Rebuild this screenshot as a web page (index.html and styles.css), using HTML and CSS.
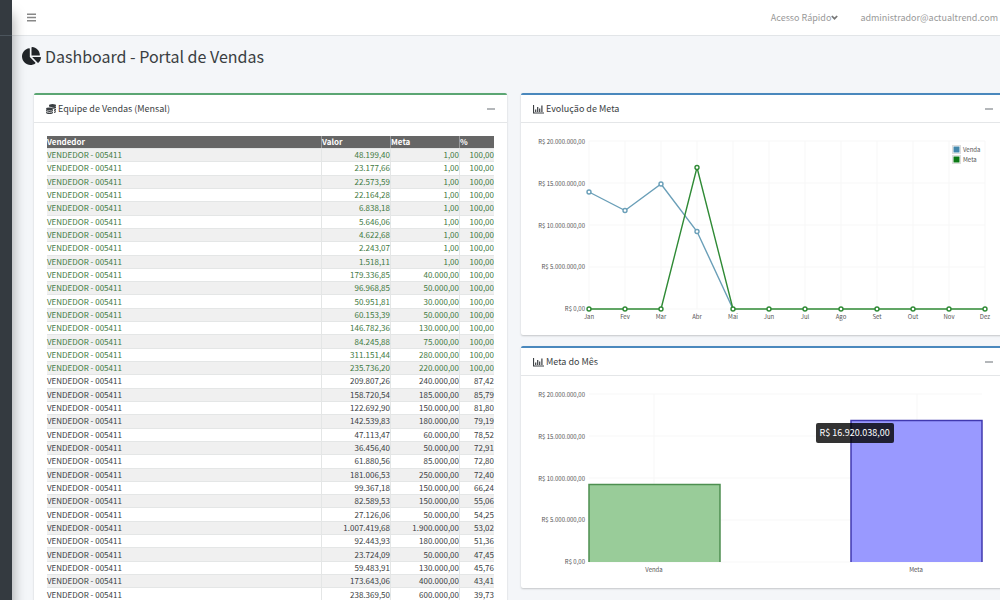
FILE: index.html
```html
<!DOCTYPE html>
<html lang="pt-BR">
<head>
    <meta charset="UTF-8">
    <meta name="viewport" content="width=device-width, initial-scale=1.0">
    <title>Dashboard - Portal de Vendas</title>
    <link rel="stylesheet" href="styles.css">
</head>
<body>
    <div class="wrapper">
        <aside class="sidebar">
            <div class="sidebar-brand"></div>
        </aside>
        <div class="page">
            <header class="navbar">
                <button class="menu-btn" type="button" aria-label="Menu">
                    <svg viewBox="0 0 9 9" width="9" height="9"><path d="M0 1.2h9M0 4.5h9M0 7.8h9" stroke="currentColor" stroke-width="1.4"/></svg>
                </button>
                <nav class="nav-right">
                    <a href="#">Acesso Rápido<svg class="chevron" viewBox="0 0 7 5" width="7" height="5"><path d="M.8 1l2.7 2.7L6.2 1" fill="none" stroke="currentColor" stroke-width="1.7"/></svg></a>
                    <a href="#">administrador@actualtrend.com</a>
                </nav>
            </header>

            <main>
                <h1>
                    <svg viewBox="0 0 544 512" width="19" height="18" fill="currentColor"><path d="M527.790 288H290.500l158.030 158.030c6.040 6.040 15.980 6.530 22.190.68 38.700-36.460 65.320-85.560 73.130-140.860 1.340-9.460-6.510-17.850-16.060-17.850zm-15.830-64.800C503.720 103.740 408.260 8.280 288.800.040 279.680-.590 272 7.100 272 16.240V240h223.770c9.140 0 16.820-7.680 16.190-16.800zM224 288V50.710c0-9.550-8.390-17.400-17.840-16.060C86.990 51.490-4.100 155.600.140 280.370 4.500 408.510 114.830 513.590 243.030 511.980c50.400-.630 96.970-16.870 135.260-44.030 7.900-5.600 8.420-17.230 1.570-24.080L224 288z"/></svg>
                    Dashboard - Portal de Vendas
                </h1>

                <div class="grid">
                    <section class="card card-green">
                        <div class="card-header">
                            <h2>
                                <svg viewBox="0 0 10 10" width="10" height="10" fill="currentColor"><ellipse cx="6.500" cy="1.500" rx="3.500" ry="1.500"/><path d="M3 2.200c1.500 1.300 5.500 1.300 7 0v1.500c-.6.700-1.600 1-2.700 1.100C6.800 3.600 5 3 3 3.100zM8 5.500c.8-.1 1.500-.4 2-.8v1.500c-.5.500-1.200.8-2 .9zM8 7.700c.8-.1 1.500-.4 2-.8v.9c0 .6-.9 1-2 1.200z"/><ellipse cx="3.500" cy="4.900" rx="3.500" ry="1.300"/><path d="M0 5.800c1.500 1.200 5.500 1.200 7 0v1.300c-1.500 1.200-5.500 1.200-7 0zM0 7.800c1.500 1.200 5.500 1.200 7 0v.9c0 1.700-7 1.700-7 0z"/></svg>
                                Equipe de Vendas (Mensal)
                            </h2>
                            <button class="collapse-btn" type="button" aria-label="Minimizar"></button>
                        </div>
                        <div class="card-body">
                            <table class="sales">
                                <thead>
                                    <tr><th>Vendedor</th><th class="col-value">Valor</th><th class="col-value">Meta</th><th class="col-percent">%</th></tr>
                                </thead>
                                <tbody>
                                    <tr class="ok"><td>VENDEDOR - 005411</td><td>48.199,40</td><td>1,00</td><td>100,00</td></tr>
                                    <tr class="ok"><td>VENDEDOR - 005411</td><td>23.177,66</td><td>1,00</td><td>100,00</td></tr>
                                    <tr class="ok"><td>VENDEDOR - 005411</td><td>22.573,59</td><td>1,00</td><td>100,00</td></tr>
                                    <tr class="ok"><td>VENDEDOR - 005411</td><td>22.164,28</td><td>1,00</td><td>100,00</td></tr>
                                    <tr class="ok"><td>VENDEDOR - 005411</td><td>6.838,18</td><td>1,00</td><td>100,00</td></tr>
                                    <tr class="ok"><td>VENDEDOR - 005411</td><td>5.646,06</td><td>1,00</td><td>100,00</td></tr>
                                    <tr class="ok"><td>VENDEDOR - 005411</td><td>4.622,68</td><td>1,00</td><td>100,00</td></tr>
                                    <tr class="ok"><td>VENDEDOR - 005411</td><td>2.243,07</td><td>1,00</td><td>100,00</td></tr>
                                    <tr class="ok"><td>VENDEDOR - 005411</td><td>1.518,11</td><td>1,00</td><td>100,00</td></tr>
                                    <tr class="ok"><td>VENDEDOR - 005411</td><td>179.336,85</td><td>40.000,00</td><td>100,00</td></tr>
                                    <tr class="ok"><td>VENDEDOR - 005411</td><td>96.968,85</td><td>50.000,00</td><td>100,00</td></tr>
                                    <tr class="ok"><td>VENDEDOR - 005411</td><td>50.951,81</td><td>30.000,00</td><td>100,00</td></tr>
                                    <tr class="ok"><td>VENDEDOR - 005411</td><td>60.153,39</td><td>50.000,00</td><td>100,00</td></tr>
                                    <tr class="ok"><td>VENDEDOR - 005411</td><td>146.782,36</td><td>130.000,00</td><td>100,00</td></tr>
                                    <tr class="ok"><td>VENDEDOR - 005411</td><td>84.245,88</td><td>75.000,00</td><td>100,00</td></tr>
                                    <tr class="ok"><td>VENDEDOR - 005411</td><td>311.151,44</td><td>280.000,00</td><td>100,00</td></tr>
                                    <tr class="ok"><td>VENDEDOR - 005411</td><td>235.736,20</td><td>220.000,00</td><td>100,00</td></tr>
                                    <tr><td>VENDEDOR - 005411</td><td>209.807,26</td><td>240.000,00</td><td>87,42</td></tr>
                                    <tr><td>VENDEDOR - 005411</td><td>158.720,54</td><td>185.000,00</td><td>85,79</td></tr>
                                    <tr><td>VENDEDOR - 005411</td><td>122.692,90</td><td>150.000,00</td><td>81,80</td></tr>
                                    <tr><td>VENDEDOR - 005411</td><td>142.539,83</td><td>180.000,00</td><td>79,19</td></tr>
                                    <tr><td>VENDEDOR - 005411</td><td>47.113,47</td><td>60.000,00</td><td>78,52</td></tr>
                                    <tr><td>VENDEDOR - 005411</td><td>36.456,40</td><td>50.000,00</td><td>72,91</td></tr>
                                    <tr><td>VENDEDOR - 005411</td><td>61.880,56</td><td>85.000,00</td><td>72,80</td></tr>
                                    <tr><td>VENDEDOR - 005411</td><td>181.006,53</td><td>250.000,00</td><td>72,40</td></tr>
                                    <tr><td>VENDEDOR - 005411</td><td>99.367,18</td><td>150.000,00</td><td>66,24</td></tr>
                                    <tr><td>VENDEDOR - 005411</td><td>82.589,53</td><td>150.000,00</td><td>55,06</td></tr>
                                    <tr><td>VENDEDOR - 005411</td><td>27.126,06</td><td>50.000,00</td><td>54,25</td></tr>
                                    <tr><td>VENDEDOR - 005411</td><td>1.007.419,68</td><td>1.900.000,00</td><td>53,02</td></tr>
                                    <tr><td>VENDEDOR - 005411</td><td>92.443,93</td><td>180.000,00</td><td>51,36</td></tr>
                                    <tr><td>VENDEDOR - 005411</td><td>23.724,09</td><td>50.000,00</td><td>47,45</td></tr>
                                    <tr><td>VENDEDOR - 005411</td><td>59.483,91</td><td>130.000,00</td><td>45,76</td></tr>
                                    <tr><td>VENDEDOR - 005411</td><td>173.643,06</td><td>400.000,00</td><td>43,41</td></tr>
                                    <tr><td>VENDEDOR - 005411</td><td>238.369,50</td><td>600.000,00</td><td>39,73</td></tr>
                                </tbody>
                            </table>
                        </div>
                    </section>

                    <div class="column">
                        <section class="card card-blue">
                            <div class="card-header">
                                <h2>
                                    <svg viewBox="0 0 11 10" width="11" height="10"><path d="M.5 1v8H11M2.700 8V5.500M4.700 8V3M6.700 8V4.500M8.900 8V1.500" fill="none" stroke="currentColor" stroke-width="1.200"/></svg>
                                    Evolução de Meta
                                </h2>
                                <button class="collapse-btn" type="button" aria-label="Minimizar"></button>
                            </div>
                            <div class="card-body">
                                <svg class="chart" viewBox="0 0 458 186">
                                    <path class="gridline" d="M55 5H451M55 47H451M55 89H451M55 131H451M55 173H451M55 5V173M91 5V173M127 5V173M163 5V173M199 5V173M235 5V173M271 5V173M307 5V173M343 5V173M379 5V173M415 5V173M451 5V173"/>
                                    <g class="y-axis">
                                        <text x="51" y="8">R$ 20.000.000,00</text>
                                        <text x="51" y="50">R$ 15.000.000,00</text>
                                        <text x="51" y="92">R$ 10.000.000,00</text>
                                        <text x="51" y="133">R$ 5.000.000,00</text>
                                        <text x="51" y="175">R$ 0,00</text>
                                    </g>
                                    <g class="x-axis">
                                        <text x="55" y="183">Jan</text>
                                        <text x="91" y="183">Fev</text>
                                        <text x="127" y="183">Mar</text>
                                        <text x="163" y="183">Abr</text>
                                        <text x="199" y="183">Mai</text>
                                        <text x="235" y="183">Jun</text>
                                        <text x="271" y="183">Jul</text>
                                        <text x="307" y="183">Ago</text>
                                        <text x="343" y="183">Set</text>
                                        <text x="379" y="183">Out</text>
                                        <text x="415" y="183">Nov</text>
                                        <text x="451" y="183">Dez</text>
                                    </g>
                                    <g class="line-venda">
                                        <polyline points="55,56 91,74.500 127,48 163,95.500 199,173"/>
                                        <circle cx="55" cy="56" r="2"/>
                                        <circle cx="91" cy="74.500" r="2"/>
                                        <circle cx="127" cy="48" r="2"/>
                                        <circle cx="163" cy="95.500" r="2"/>
                                    </g>
                                    <g class="line-meta">
                                        <polyline points="55,173 127,173 163,31.500 199,173 451,173"/>
                                        <circle cx="55" cy="173" r="2"/>
                                        <circle cx="91" cy="173" r="2"/>
                                        <circle cx="127" cy="173" r="2"/>
                                        <circle cx="163" cy="31.500" r="2"/>
                                        <circle cx="199" cy="173" r="2"/>
                                        <circle cx="235" cy="173" r="2"/>
                                        <circle cx="271" cy="173" r="2"/>
                                        <circle cx="307" cy="173" r="2"/>
                                        <circle cx="343" cy="173" r="2"/>
                                        <circle cx="379" cy="173" r="2"/>
                                        <circle cx="415" cy="173" r="2"/>
                                        <circle cx="451" cy="173" r="2"/>
                                    </g>
                                    <g class="legend">
                                        <rect x="418.500" y="9.500" width="8" height="8" fill="#fff" stroke="#ddd"/>
                                        <rect x="420" y="11" width="5" height="5" fill="#4488ac" stroke="#4488ac"/>
                                        <text x="429" y="16">Venda</text>
                                        <rect x="418.500" y="19.500" width="8" height="8" fill="#fff" stroke="#ddd"/>
                                        <rect x="420" y="21" width="5" height="5" fill="#0d7a16" stroke="#0d7a16"/>
                                        <text x="429" y="26">Meta</text>
                                    </g>
                                </svg>
                            </div>
                        </section>

                        <section class="card card-blue">
                            <div class="card-header">
                                <h2>
                                    <svg viewBox="0 0 11 10" width="11" height="10"><path d="M.5 1v8H11M2.700 8V5.500M4.700 8V3M6.700 8V4.500M8.900 8V1.500" fill="none" stroke="currentColor" stroke-width="1.200"/></svg>
                                    Meta do Mês
                                </h2>
                                <button class="collapse-btn" type="button" aria-label="Minimizar"></button>
                            </div>
                            <div class="card-body">
                                <svg class="chart" viewBox="0 0 458 186">
                                    <path class="gridline" d="M55 5H448M55 47H448M55 89H448M55 131H448M55 173H448M120 5V173M383 5V173"/>
                                    <g class="y-axis">
                                        <text x="51" y="8">R$ 20.000.000,00</text>
                                        <text x="51" y="50">R$ 15.000.000,00</text>
                                        <text x="51" y="92">R$ 10.000.000,00</text>
                                        <text x="51" y="133">R$ 5.000.000,00</text>
                                        <text x="51" y="175">R$ 0,00</text>
                                    </g>
                                    <g class="x-axis">
                                        <text x="120" y="183">Venda</text>
                                        <text x="382" y="183">Meta</text>
                                    </g>
                                    <path class="bar-venda" d="M55 173V95.500H186V173"/>
                                    <path class="bar-meta" d="M317 173V31.500H448V173"/>
                                </svg>
                                <div class="tooltip" role="tooltip">R$ 16.920.038,00</div>
                            </div>
                        </section>
                    </div>
                </div>
            </main>
        </div>
    </div>
</body>
</html>
```
FILE: styles.css
```css
* {
    box-sizing: border-box;
}

body {
    margin: 0;
    font-family: "Noto Sans CJK SC", "Open Sans", sans-serif;
    font-size: 9px;
    line-height: 12px;
    color: #3a3e42;
    background-color: #f4f6f9;
    overflow-x: hidden;
}

.wrapper {
    display: flex;
    min-height: 100vh;
}

.sidebar {
    position: relative;
    z-index: 2;
    flex: 0 0 12px;
    background-color: #343a40;
    box-shadow: 0 14px 14px rgba(0, 0, 0, 0.4);
}

.sidebar-brand {
    height: 36px;
    border-bottom: 1px solid #4b545c;
}

.page {
    flex: 1;
    min-width: 0;
}

.navbar {
    display: flex;
    justify-content: space-between;
    align-items: center;
    height: 36px;
    padding: 0 2px 0 15px;
    background-color: #fff;
    border-bottom: 1px solid #e2e5e8;
}

.menu-btn {
    display: flex;
    padding: 0;
    border: none;
    background: none;
    color: #888;
    cursor: pointer;
}

.nav-right {
    display: flex;
    gap: 22px;
}

.nav-right a {
    display: flex;
    align-items: center;
    color: #999;
    text-decoration: none;
}

.chevron {
    color: #777;
}

h1 {
    display: flex;
    align-items: center;
    gap: 4px;
    margin: 0;
    padding: 8px 10px 25px;
    font-size: 16px;
    line-height: 24px;
    font-weight: normal;
}

h1 svg {
    color: #212529;
}

.grid {
    display: grid;
    grid-template-columns: 473fr 484fr;
    gap: 14px;
    align-items: start;
    margin-right: -5px;
    padding: 0 0 12px 22px;
}

.column {
    display: grid;
    gap: 11px;
}

.card {
    background-color: #fff;
    border-top: 2px solid;
    border-radius: 2px;
    box-shadow: 0 1px 2px rgba(0, 0, 0, 0.2);
}

.card-green {
    border-top-color: #5ba673;
}

.card-blue {
    border-top-color: #4a88bd;
}

.card-header {
    display: flex;
    justify-content: space-between;
    align-items: center;
    height: 28px;
    padding: 0 12px;
    border-bottom: 1px solid #e4e6e8;
}

.card-header h2 {
    display: flex;
    align-items: center;
    gap: 2px;
    margin: 0;
    font-size: 9px;
    font-weight: normal;
}

.collapse-btn {
    width: 8px;
    height: 2px;
    padding: 0;
    border: none;
    background-color: #b4b7ba;
    cursor: pointer;
}

.card-body {
    position: relative;
    padding: 13px;
}

.sales {
    width: 100%;
    height: 465px;
    table-layout: fixed;
    border-collapse: separate;
    border-spacing: 0;
    font-size: 8px;
    line-height: 12px;
}

.sales th {
    padding: 0;
    background-color: #666;
    border-right: 1px solid #999;
    color: #fff;
    text-align: left;
}

.sales .col-value {
    width: 69px;
}

.sales .col-percent {
    width: 34px;
}

.sales td {
    padding: 0;
    border-top: 1px solid #e4e6e6;
    border-right: 1px solid #e4e6e6;
    text-align: right;
}

.sales td:first-child {
    text-align: left;
}

.sales th:last-child,
.sales td:last-child {
    border-right: none;
}

.sales tbody tr:nth-child(odd) {
    background-color: #f0f0f0;
}

.sales .ok {
    color: #3f7a42;
}

.chart {
    display: block;
    width: 100%;
    height: auto;
    overflow: visible;
    font-size: 6px;
    fill: #545454;
}

.gridline {
    fill: none;
    stroke: #f7f7f7;
}

.y-axis text {
    text-anchor: end;
}

.x-axis text {
    text-anchor: middle;
}

.line-venda {
    fill: #fff;
    stroke: #6a9fb8;
}

.line-meta {
    fill: #fff;
    stroke: #2f8a35;
}

.line-venda,
.line-meta {
    stroke-width: 1.4px;
}

.chart polyline {
    fill: none;
}

.bar-venda {
    fill: #99cc99;
    stroke: #4d8f50;
    stroke-width: 1.5px;
}

.bar-meta {
    fill: #9999ff;
    stroke: #4038b0;
    stroke-width: 1.5px;
}

.tooltip {
    position: absolute;
    top: 47px;
    right: 23%;
    padding: 4px;
    border-radius: 2px;
    background-color: rgba(0, 0, 0, 0.8);
    color: #fff;
    font-size: 9px;
}
```
